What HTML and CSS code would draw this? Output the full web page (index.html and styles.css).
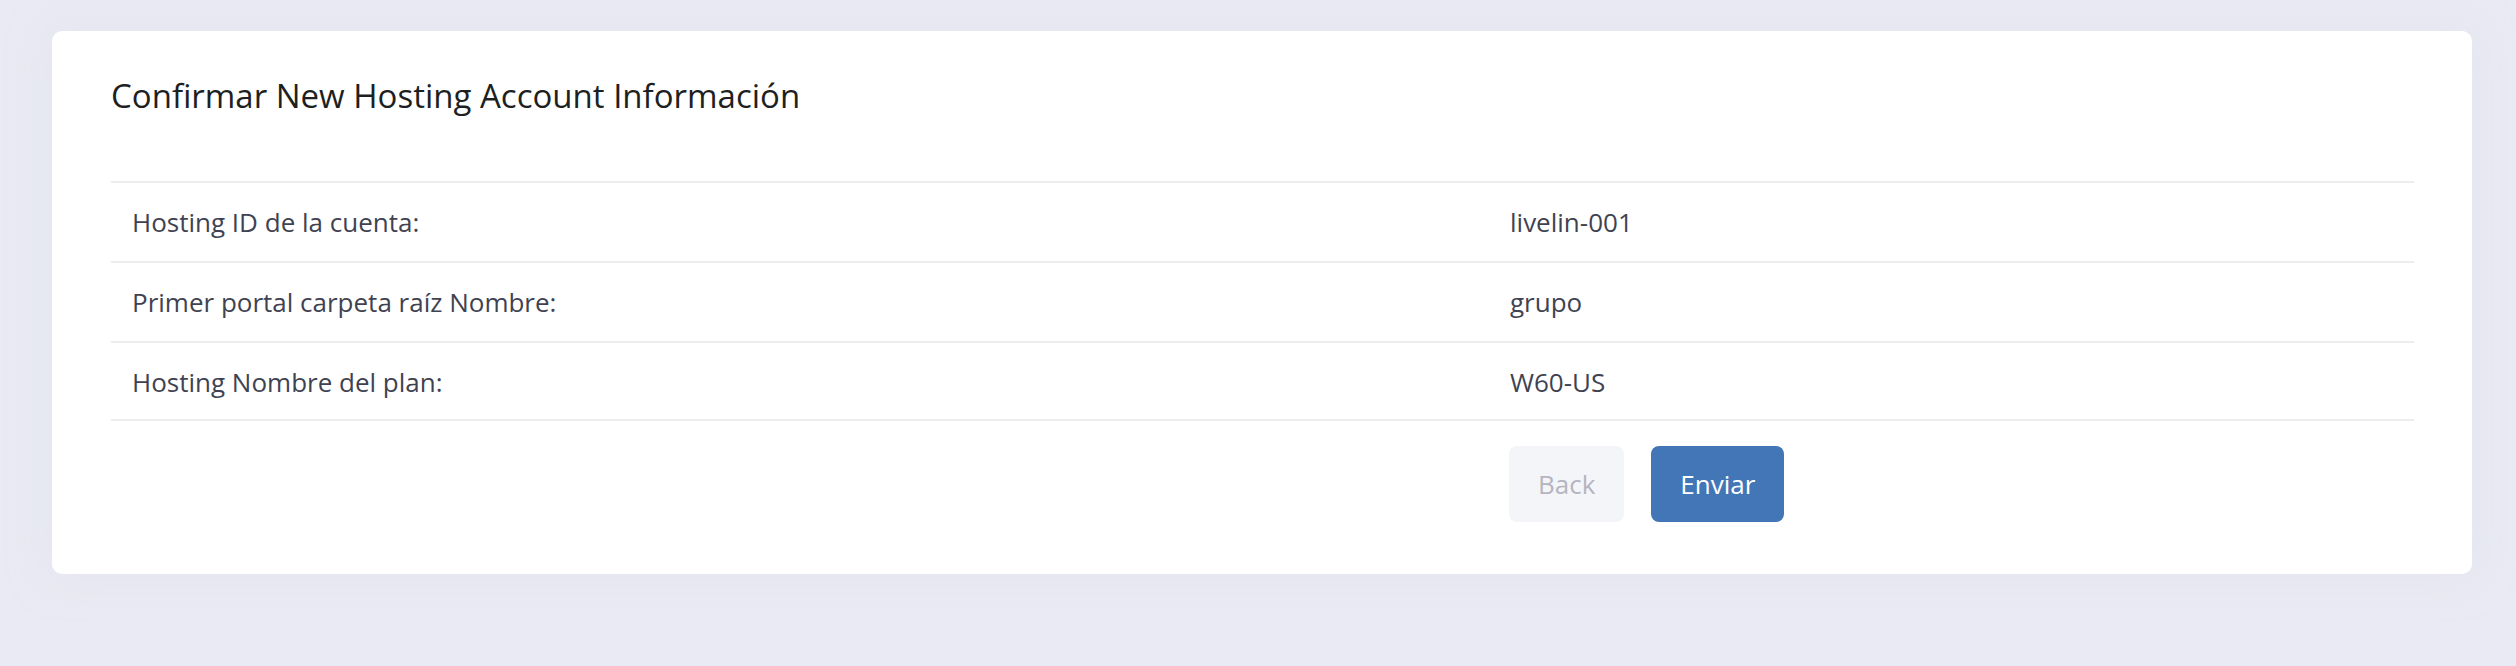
FILE: index.html
```html
<!DOCTYPE html>
<html lang="es">
<head>
<meta charset="utf-8">
<title>Confirmar New Hosting Account Información</title>
<link rel="stylesheet" href="styles.css">
</head>
<body>
<main class="page">
  <section class="card">
    <h1 class="card-title">Confirmar New Hosting Account Información</h1>
    <div class="info-table">
      <div class="info-row">
        <div class="info-label">Hosting ID de la cuenta:</div>
        <div class="info-value">livelin-001</div>
      </div>
      <div class="info-row">
        <div class="info-label">Primer portal carpeta raíz Nombre:</div>
        <div class="info-value">grupo</div>
      </div>
      <div class="info-row">
        <div class="info-label">Hosting Nombre del plan:</div>
        <div class="info-value">W60-US</div>
      </div>
    </div>
    <div class="actions">
      <div class="actions-spacer"></div>
      <div class="actions-buttons">
        <button class="btn btn-back" type="button" disabled>Back</button>
        <button class="btn btn-primary" type="submit">Enviar</button>
      </div>
    </div>
  </section>
</main>
</body>
</html>
```

FILE: styles.css
```css
html, body {
  margin: 0;
  padding: 0;
}

body {
  background: #e9eaf3;
  font-family: "Open Sans", "Noto Sans", "Liberation Sans", sans-serif;
  color: #3f4351;
  min-height: 666px;
}

.page {
  padding: 31px 44px 0 52px;
}

.card {
  background: #ffffff;
  border-radius: 10px;
  padding: 42px 58px 52px 59px;
  box-shadow: 0 0 40px rgba(224, 226, 238, 0.5);
}

.card-title {
  margin: 0 0 63px 0;
  font-size: 33px;
  font-weight: 400;
  line-height: normal;
  color: #1e1f22;
}

.info-table {
  display: flex;
  flex-direction: column;
}

.info-row {
  display: grid;
  grid-template-columns: 1378px 1fr;
  border-top: 2px solid #ededf0;
}

.info-row:last-child {
  border-bottom: 2px solid #ededf0;
}

.info-label,
.info-value {
  padding: 21px 21px;
  font-size: 26px;
  line-height: 36px;
  color: #3f4351;
}

.info-row:last-child .info-label,
.info-row:last-child .info-value {
  padding-bottom: 19px;
}

.actions {
  display: grid;
  grid-template-columns: 1378px 1fr;
  padding-top: 25px;
}

.actions-buttons {
  display: flex;
  gap: 27px;
  padding-left: 20px;
}

.btn {
  height: 76px;
  padding: 0 29px;
  border: none;
  border-radius: 8px;
  font-family: inherit;
  font-size: 26px;
  line-height: 36px;
}

.btn-back {
  background: #f4f5f9;
  color: #b4b5c0;
}

.btn-primary {
  background: #4276b7;
  color: #ffffff;
}
```
